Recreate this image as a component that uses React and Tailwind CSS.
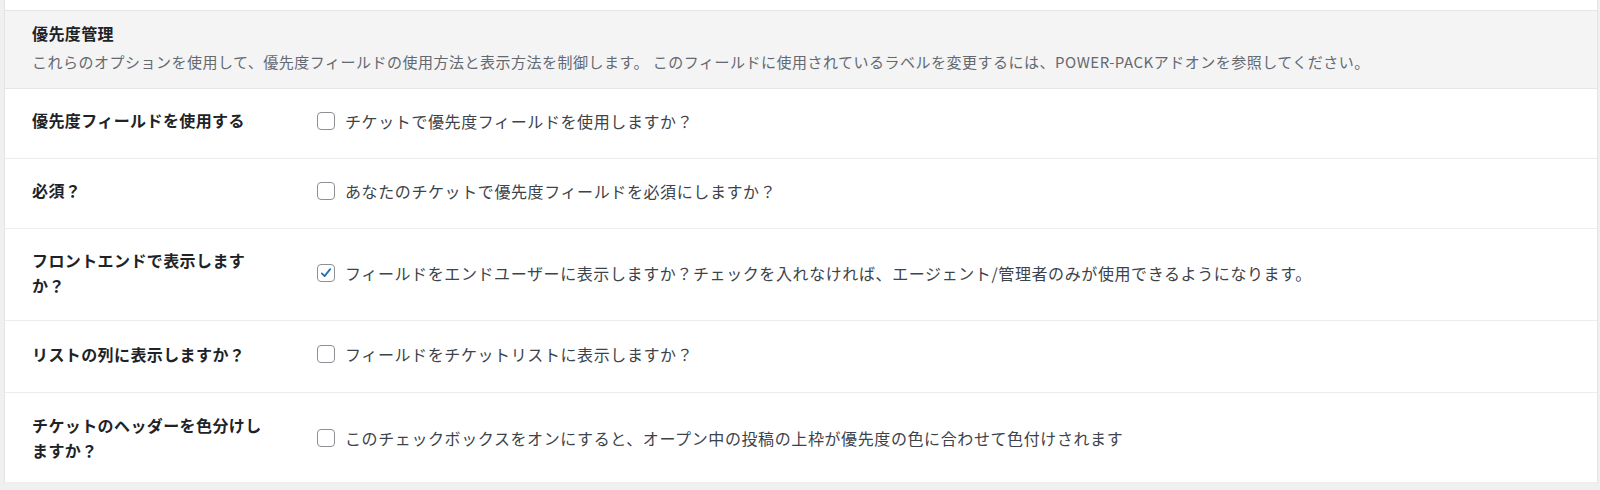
import React from 'react'

const rows = [
  { label: '優先度フィールドを使用する', text: 'チケットで優先度フィールドを使用しますか？', checked: false, h: 'h-[70px] pb-[6px]' },
  { label: '必須？', text: 'あなたのチケットで優先度フィールドを必須にしますか？', checked: false, h: 'h-[70px] pb-[6px]' },
  { label: 'フロントエンドで表示しますか？', text: 'フィールドをエンドユーザーに表示しますか？チェックを入れなければ、エージェント/管理者のみが使用できるようになります。', checked: true, h: 'h-[92px] pb-[3px]' },
  { label: 'リストの列に表示しますか？', text: 'フィールドをチケットリストに表示しますか？', checked: false, h: 'h-[72px] pb-[5px]' },
  { label: 'チケットのヘッダーを色分けしますか？', text: 'このチェックボックスをオンにすると、オープン中の投稿の上枠が優先度の色に合わせて色付けされます', checked: false, h: 'h-[90px]' },
]

function Checkbox({ checked }) {
  return (
    <span className="w-[18px] h-[18px] shrink-0 rounded-[4px] border border-[#8c8f94] bg-white flex items-center justify-center">
      {checked && (
        <svg width="14" height="14" viewBox="0 0 20 20">
          <path d="M4 10.5 L8 14.5 L16 4.5" fill="none" stroke="#2271b1" strokeWidth="2.6" strokeLinecap="round" strokeLinejoin="round" />
        </svg>
      )}
    </span>
  )
}

export default function App() {
  return (
    <div
      className="h-[490px] bg-[#f0f0f1] pl-[4px] pr-[2px] overflow-hidden"
      style={{ fontFamily: '"Noto Sans CJK JP", "Noto Sans", sans-serif' }}
    >
      <div className="bg-white border-x border-[#e4e4e4]">
        <div className="h-[10px] bg-white" />
        <div className="bg-[#f4f4f4] border-y border-[#e6e6e6] pl-[27px] pt-[12px] pb-[15px]">
          <h2 className="text-[16px] leading-[20px] font-bold text-[#1d2327] tracking-[0.4px]">優先度管理</h2>
          <p className="mt-[8px] text-[15px] leading-[22px] text-[#646970] tracking-[0.5px]">
            これらのオプションを使用して、優先度フィールドの使用方法と表示方法を制御します。 このフィールドに使用されているラベルを変更するには、POWER-PACKアドオンを参照してください。
          </p>
        </div>
        {rows.map((row, i) => (
          <div key={i} className={`${row.h} flex items-center pl-[27px] border-b border-[#ededed]`}>
            <div className="w-[285px] pr-[53px] text-[16px] leading-[25px] font-bold text-[#1d2327] tracking-[0.4px]">
              {row.label}
            </div>
            <div className="flex items-center gap-[10px] text-[16px] text-[#3c434a] tracking-[0.6px]">
              <Checkbox checked={row.checked} />
              <span>{row.text}</span>
            </div>
          </div>
        ))}
      </div>
    </div>
  )
}
